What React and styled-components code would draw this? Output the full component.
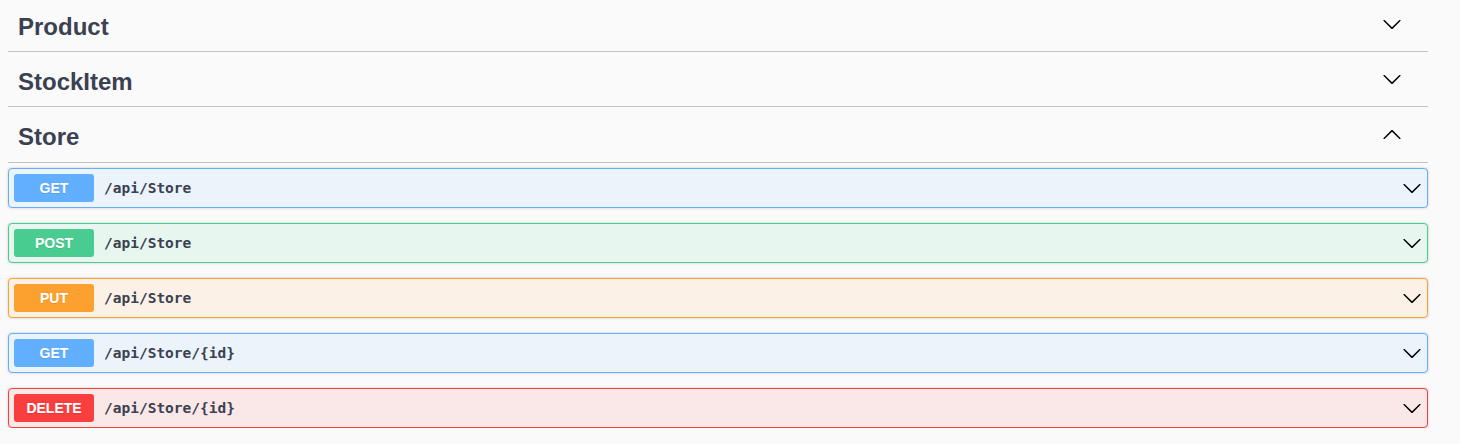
import styled, { createGlobalStyle } from 'styled-components'

const GlobalStyle = createGlobalStyle`
  html, body {
    margin: 0;
    padding: 0;
    background: #fafafa;
  }
  body {
    font-family: "Liberation Sans", Arial, sans-serif;
    color: #3b4151;
  }
`

const methods = {
  GET: { main: '#61affe', bg: '#ebf3fb' },
  POST: { main: '#49cc90', bg: '#e8f6f0' },
  PUT: { main: '#fca130', bg: '#fbf1e6' },
  DELETE: { main: '#f93e3e', bg: '#fae7e7' },
}

const tags = ['Product', 'StockItem']

const ops = [
  { method: 'GET', path: '/api/Store' },
  { method: 'POST', path: '/api/Store' },
  { method: 'PUT', path: '/api/Store' },
  { method: 'GET', path: '/api/Store/{id}' },
  { method: 'DELETE', path: '/api/Store/{id}' },
]

function Arrow({ up }) {
  return (
    <svg width="20" height="20" viewBox="0 0 20 20" style={{ transform: up ? 'rotate(180deg)' : 'none' }}>
      <path
        fill="#000"
        d="M17.418 6.109c.272-.268.709-.268.979 0s.271.701 0 .969l-7.908 7.83c-.27.268-.707.268-.979 0l-7.908-7.83c-.27-.268-.27-.701 0-.969.271-.268.709-.268.979 0L10 13.25l7.418-7.141z"
      />
    </svg>
  )
}

export default function App() {
  return (
    <Wrap>
      <GlobalStyle />
      {tags.map(t => (
        <TagHeader key={t}>
          <span>{t}</span>
          <Toggle><Arrow /></Toggle>
        </TagHeader>
      ))}
      <TagHeader $last>
        <span>Store</span>
        <Toggle><Arrow up /></Toggle>
      </TagHeader>
      <Ops>
        {ops.map((o, i) => (
          <OpBlock key={i} $c={methods[o.method]}>
            <Method $c={methods[o.method]}>{o.method}</Method>
            <Path>{o.path}</Path>
            <OpToggle><Arrow /></OpToggle>
          </OpBlock>
        ))}
      </Ops>
    </Wrap>
  )
}

const Wrap = styled.div`
  width: 1420px;
  padding: 2px 0 0 8px;
`

const TagHeader = styled.h3`
  margin: 0 0 5px;
  height: ${p => (p.$last ? 50 : 49)}px;
  box-sizing: content-box;
  padding: 0 26px 0 10px;
  display: flex;
  align-items: center;
  justify-content: space-between;
  border-bottom: 1px solid rgba(59, 65, 81, 0.3);
  font-size: 24px;
  font-weight: 700;
  color: #3b4151;
`

const Toggle = styled.div`
  display: flex;
  margin-bottom: 5px;
`

const Ops = styled.div`
  display: flex;
  flex-direction: column;
  gap: 15px;
`

const OpBlock = styled.div`
  height: 38px;
  box-sizing: content-box;
  border: 1px solid ${p => p.$c.main};
  border-radius: 4px;
  background: ${p => p.$c.bg};
  box-shadow: 0 0 3px rgba(0, 0, 0, 0.19);
  display: flex;
  align-items: center;
  padding: 0 5px;
`

const Method = styled.span`
  width: 80px;
  height: 28px;
  border-radius: 3px;
  background: ${p => p.$c.main};
  color: #fff;
  font-size: 14px;
  font-weight: 700;
  display: flex;
  align-items: center;
  justify-content: center;
  text-shadow: 0 1px 0 rgba(0, 0, 0, 0.1);
`

const Path = styled.span`
  flex: 1;
  padding: 0 10px;
  font-family: "DejaVu Sans Mono", "Liberation Mono", monospace;
  font-size: 14.5px;
  font-weight: 700;
  color: #3b4151;
`

const OpToggle = styled.div`
  display: flex;
`
